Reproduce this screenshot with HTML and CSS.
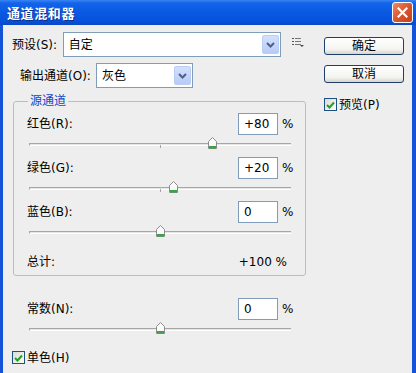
FILE: index.html
```html
<!DOCTYPE html>
<html lang="zh-CN">
<head>
  <meta charset="UTF-8" />
  <meta name="viewport" content="width=device-width, initial-scale=1.0"/>
  <title>通道混和器</title>
  <link rel="stylesheet" href="styles.css">
</head>
<body>

<div class="dialog">
  <div class="titlebar">
    <span class="title">通道混和器</span>
    <span class="close">
      <svg width="11" height="11" viewBox="0 0 11 11"><path d="M1.5 1.5 L9.5 9.5 M9.5 1.5 L1.5 9.5" stroke="#fff" stroke-width="2.2" stroke-linecap="square"/></svg>
    </span>
  </div>

  <div class="body">
    <div class="main">
      <div class="row preset">
        <span class="lbl">预设(S):</span>
        <div class="combo wide">
          <span>自定</span>
          <span class="arrow"><svg width="9" height="6" viewBox="0 0 9 6"><path d="M1 1 L4.5 4.5 L8 1" fill="none" stroke="#4d6185" stroke-width="2"/></svg></span>
        </div>
        <svg class="menu-icon" width="13" height="10" viewBox="0 0 13 10">
          <rect x="0" y="0" width="2" height="1" fill="#555"/>
          <rect x="3" y="0" width="6" height="1" fill="#777"/>
          <rect x="0" y="3" width="2" height="1" fill="#555"/>
          <rect x="3" y="3" width="6" height="1" fill="#777"/>
          <rect x="0" y="6" width="2" height="1" fill="#555"/>
          <rect x="3" y="6" width="6" height="1" fill="#777"/>
          <path d="M8 7 H12 L10 9 Z" fill="#444"/>
        </svg>
      </div>

      <div class="row output">
        <span class="lbl">输出通道(O):</span>
        <div class="combo narrow">
          <span>灰色</span>
          <span class="arrow"><svg width="9" height="6" viewBox="0 0 9 6"><path d="M1 1 L4.5 4.5 L8 1" fill="none" stroke="#4d6185" stroke-width="2"/></svg></span>
        </div>
      </div>

      <fieldset class="group">
        <legend>源通道</legend>
        <div class="group-inner">
          <div class="channel">
            <div class="channel-head">
              <span class="name">红色(R):</span>
              <span class="num">+80</span>
              <span class="pct">%</span>
            </div>
            <div class="slider">
              <div class="track">
                <span class="thumb" style="left: 70%"><svg width="9" height="12" viewBox="0 0 9 12"><path d="M0.5 11.5 V4.5 L4.5 0.5 L8.5 4.5 V11.5 Z" fill="#fafafa" stroke="#8c8c8c"/><rect x="1" y="9" width="7" height="2.5" fill="#3aa34a"/></svg></span>
              </div>
            </div>
          </div>
          <div class="channel">
            <div class="channel-head">
              <span class="name">绿色(G):</span>
              <span class="num">+20</span>
              <span class="pct">%</span>
            </div>
            <div class="slider">
              <div class="track">
                <span class="thumb" style="left: 55%"><svg width="9" height="12" viewBox="0 0 9 12"><path d="M0.5 11.5 V4.5 L4.5 0.5 L8.5 4.5 V11.5 Z" fill="#fafafa" stroke="#8c8c8c"/><rect x="1" y="9" width="7" height="2.5" fill="#3aa34a"/></svg></span>
              </div>
            </div>
          </div>
          <div class="channel">
            <div class="channel-head">
              <span class="name">蓝色(B):</span>
              <span class="num">0</span>
              <span class="pct">%</span>
            </div>
            <div class="slider">
              <div class="track">
                <span class="thumb" style="left: 50%"><svg width="9" height="12" viewBox="0 0 9 12"><path d="M0.5 11.5 V4.5 L4.5 0.5 L8.5 4.5 V11.5 Z" fill="#fafafa" stroke="#8c8c8c"/><rect x="1" y="9" width="7" height="2.5" fill="#3aa34a"/></svg></span>
              </div>
            </div>
          </div>
          <div class="total">
            <span>总计:</span>
            <span>+100 %</span>
          </div>
        </div>
      </fieldset>

      <div class="channel constant">
        <div class="channel-head">
          <span class="name">常数(N):</span>
          <span class="num">0</span>
          <span class="pct">%</span>
        </div>
        <div class="slider">
          <div class="track">
            <span class="thumb" style="left: 50%"><svg width="9" height="12" viewBox="0 0 9 12"><path d="M0.5 11.5 V4.5 L4.5 0.5 L8.5 4.5 V11.5 Z" fill="#fafafa" stroke="#8c8c8c"/><rect x="1" y="9" width="7" height="2.5" fill="#3aa34a"/></svg></span>
          </div>
        </div>
      </div>

      <div class="check mono">
        <span class="box"><svg width="9" height="8" viewBox="0 0 9 8"><path d="M1 4 L3.5 6.5 L8 1.5" fill="none" stroke="#21a121" stroke-width="2"/></svg></span>
        <span>单色(H)</span>
      </div>
    </div>

    <div class="side">
      <div class="btn">确定</div>
      <div class="btn cancel">取消</div>
      <div class="check preview">
        <span class="box"><svg width="9" height="8" viewBox="0 0 9 8"><path d="M1 4 L3.5 6.5 L8 1.5" fill="none" stroke="#21a121" stroke-width="2"/></svg></span>
        <span>预览(P)</span>
      </div>
    </div>
  </div>
</div>

</body>
</html>
```

FILE: styles.css
```css
* { box-sizing: border-box; }
body { margin: 0; font-family: "DejaVu Sans", "Noto Sans CJK SC", sans-serif; font-size: 12px; line-height: 14px; color: #000; background: #eeeeee; }

.dialog { width: 416px; height: 373px; display: flex; flex-direction: column; overflow: hidden; }

.titlebar { height: 25px; flex: none; display: flex; align-items: center; justify-content: space-between; padding: 0 3px 0 7px; background: linear-gradient(#3a84f4 0, #1464ea 3px, #0a5ae4 45%, #0852dc 80%, #0a48c8 100%); }
.title { color: #fff; font-family: "Noto Sans CJK SC", sans-serif; font-weight: bold; font-size: 13px; letter-spacing: 0.6px; text-shadow: 1px 1px 0 #0a2f8c; }
.close { width: 21px; height: 21px; display: flex; align-items: center; justify-content: center; border: 1px solid #fff; border-radius: 3px; background: linear-gradient(135deg, #ec8a6a, #d9552f 50%, #c4401e); }

.body { flex: 1; display: flex; background: #eeeeee; border-left: 3px solid #1453d8; border-right: 4px solid #1453d8; }
.main { width: 302px; padding-left: 9px; }
.side { width: 80px; margin-left: 19px; padding-top: 12px; }

.row { display: flex; align-items: center; height: 25px; }
.preset { margin-top: 7px; }
.preset .lbl { width: 51px; }
.output { margin-top: 6px; margin-left: 8px; }
.output .lbl { width: 76px; }

.combo { height: 25px; display: flex; align-items: center; justify-content: space-between; padding: 0 1px 0 5px; background: #fff; border: 1px solid #7f9db9; }
.combo.wide { width: 219px; }
.combo.narrow { width: 97px; }
.arrow { width: 17px; height: 19px; display: flex; align-items: center; justify-content: center; border: 1px solid #bccdf5; border-radius: 2px; background: linear-gradient(#d3e0fd, #b8cbf8); }
.menu-icon { margin-left: 11px; margin-top: -3px; }

.group { width: 293px; margin: 6px 0 0 1px; padding: 0; border: 1px solid #bdbdbd; border-radius: 3px; min-width: 0; }
.group legend { margin-left: 14px; padding: 0 2px; color: #1346c9; line-height: 14px; }
.group-inner { padding: 5px 13px 6px 13px; }

.channel { height: 44px; }
.channel-head { display: flex; align-items: center; height: 22px; }
.channel-head .name { flex: 1; }
.num { width: 40px; height: 22px; padding-left: 5px; line-height: 20px; background: #fff; border: 1px solid #7f9db9; }
.pct { width: 10px; margin-left: 4px; }

.slider { height: 22px; padding-top: 8px; }
.track { position: relative; width: 262px; height: 3px; margin-left: 2px; background: #e6e6e6; border-top: 1px solid #a6a6a6; border-left: 1px solid #a6a6a6; border-bottom: 1px solid #fff; }
.track::after { content: ""; position: absolute; left: 130px; top: 1px; width: 1px; height: 3px; background: #a6a6a6; }
.thumb { position: absolute; top: -7px; width: 9px; height: 12px; margin-left: -5px; z-index: 1; }
.thumb svg { display: block; }

.total { display: flex; justify-content: space-between; height: 14px; margin-top: 10px; padding-right: 5px; }

.constant { width: 265px; margin-top: 22px; margin-left: 15px; }

.check { display: flex; align-items: center; height: 13px; }
.box { width: 13px; height: 13px; margin-right: 2px; display: flex; align-items: center; justify-content: center; border: 1px solid #1c5180; background: linear-gradient(135deg, #dcdcd5, #fbfbf9); }
.mono { margin-top: 9px; }
.preview { margin-top: 15px; }

.btn { width: 80px; height: 18px; display: flex; align-items: center; justify-content: center; border: 1px solid #1e3f6c; border-radius: 3px; background: linear-gradient(#ffffff, #f4f4f0 70%, #d8d4cb); }
.cancel { margin-top: 10px; }
```
